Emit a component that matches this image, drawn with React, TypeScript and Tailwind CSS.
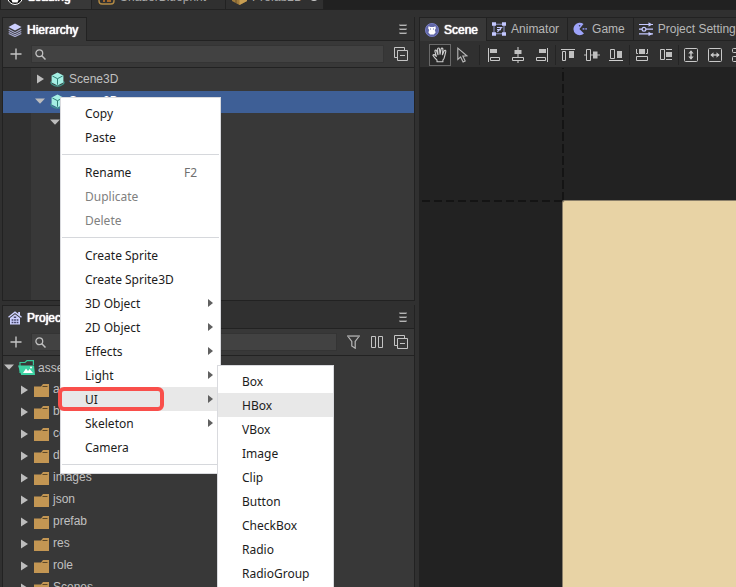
import React from "react";

function Svg({ w, h, className, children }: { w: number; h: number; className?: string; children: React.ReactNode }) {
  return (
    <svg
      width={w}
      height={h}
      viewBox={`0 0 ${w} ${h}`}
      fill="none"
      aria-hidden="true"
      className={`shrink-0 ${className ?? ""}`}
    >
      {children}
    </svg>
  );
}

const Layers = () => (
  <Svg w={14} h={14}>
    <path d="M7 0.5 13.5 4 7 7.5 0.5 4Z" fill="#cdd0ff" />
    <path d="M0.7 6.3 7 9.7l6.3-3.4M0.7 8.4 7 11.7l6.3-3.3M0.7 10.4 7 13.6l6.3-3.2" stroke="#a9abd2" strokeWidth="1.1" />
  </Svg>
);

const House = () => (
  <Svg w={14} h={14}>
    <path d="M0.5 6.2 7 1.2l6.5 5" stroke="#cdd0ff" strokeWidth="1.4" />
    <path d="M10.2 1h1.8v3h-1.8Z" fill="#cdd0ff" />
    <path d="M2 7 7 3.2 12 7v6.5H2Z" fill="#cdd0ff" />
    <path d="M5.8 5.5h2.4v1.6H5.8ZM3.6 8.3h1.8v1.5H3.6ZM6.1 8.3h1.8v1.5H6.1ZM8.6 8.3h1.8v1.5H8.6ZM3.6 10.8h1.8v1.5H3.6ZM6.1 10.8h1.8v1.5H6.1ZM8.6 10.8h1.8v1.5H8.6Z" fill="#45466a" />
  </Svg>
);

const Plus = () => (
  <Svg w={12} h={12}>
    <path d="M6 0.5v11M0.5 6h11" stroke="#c4c4c4" strokeWidth="1.4" />
  </Svg>
);

const Search = () => (
  <Svg w={11} h={11}>
    <circle cx="4.3" cy="4.3" r="3.4" stroke="#c0c0c0" strokeWidth="1.3" />
    <path d="m6.8 6.8 3.7 3.7" stroke="#c0c0c0" strokeWidth="1.5" />
  </Svg>
);

const Collapse = () => (
  <Svg w={14} h={14}>
    <path d="M3.5 10.5h-3v-10h10v3" stroke="#c4c4c4" />
    <path d="M3.5 3.5h10v10h-10ZM6 8.5h5" stroke="#c4c4c4" />
  </Svg>
);

const Filter = () => (
  <Svg w={13} h={14}>
    <path d="M0.7 1h11.6L8.2 6.4v6.8L4.8 11V6.4Z" stroke="#b8b8b8" strokeWidth="1.2" />
    <path d="M0.5 1.2h12" stroke="#8f8f8f" strokeWidth="1.4" />
  </Svg>
);

const Columns = () => (
  <Svg w={12} h={12}>
    <path d="M0.5 0.5h4v11h-4ZM7.5 0.5h4v11h-4Z" stroke="#c4c4c4" />
  </Svg>
);

const MenuLines = () => (
  <Svg w={8} h={11}>
    <path d="M0.5 1.5h7M0.5 5.5h7M0.5 9.5h7" stroke="#b4b4b4" />
    <path d="M0 0.5h8M0 4.5h8M0 8.5h8" stroke="#666" />
  </Svg>
);

const ArrowRight = () => (
  <Svg w={7} h={10}>
    <path d="M0 0.5 7 5 0 9.5Z" fill="#bdbdbd" />
  </Svg>
);

const ArrowDown = () => (
  <Svg w={10} h={6}>
    <path d="M0 0.5h10L5 5.7Z" fill="#bdbdbd" />
  </Svg>
);

const Cube = () => (
  <Svg w={15} h={15}>
    <path d="M1.5 9.5c-2 1.5 2 4.6 6 4.6s8-3.1 6-4.6" stroke="#3f9c90" strokeWidth="1.2" />
    <path d="M7.5 0.4 13.4 3.5v6.9l-5.9 3.1-5.9-3.1V3.5Z" fill="#a5f0e4" />
    <path d="m2.4 4 5.1 2.7L12.6 4M7.5 6.7v6" stroke="#2f7f75" />
  </Svg>
);

const Folder = () => (
  <Svg w={15} h={13}>
    <path d="M0 2.5h7l2-2.5h6v13H0Z" fill="#c39653" />
    <path d="M8.500 2.500h5" stroke="#5c4828" />
  </Svg>
);

const AssetsFolder = () => (
  <Svg w={17} h={15}>
    <path d="M2 13V2.5h5L9 0.6h6.4V5" stroke="#36c99b" strokeWidth="1.2" />
    <path d="M0 5.5h16L17 15H3.2Z" fill="#3ed3a4" />
    <path d="m5 13 3-4.5 2 2.6 1.7-2L15 13Z" fill="#fff" />
    <circle cx="13" cy="7.6" r="1" fill="#fff" />
  </Svg>
);

const SceneIcon = () => (
  <Svg w={14} h={14}>
    <circle cx="7" cy="7" r="6.6" fill="#6268a8" stroke="#7d84cf" strokeWidth="0.8" />
    <path d="M3.5 3.3 5.4 4h3.2l1.9-.7.3 2.2-1 1.5.8 2.6L8.8 11.4H5.2L3.4 9.6 4.2 7l-1-1.5Z" fill="#fff" />
    <path d="M5 6h1M8 6h1" stroke="#6268a8" />
  </Svg>
);

const AnimatorIcon = () => (
  <Svg w={14} h={14}>
    <path d="M2 2.2h10M2 11.8h10M2 2.2v9.6M12 2.2v9.6" stroke="#8a8fc0" strokeWidth="1.1" />
    <path d="M0 0.3h4v3.4H0ZM10 0.3h4v3.4h-4ZM0 10.3h4v3.4H0ZM10 10.3h4v3.4h-4Z" fill="#c4c8ff" />
    <path d="M5 5.5h4.6L5.4 9.8M5 7.6h4" stroke="#c4c8ff" strokeWidth="1.1" />
  </Svg>
);

const GameIcon = () => (
  <Svg w={14} h={14}>
    <path d="M10.5 1.9A6.3 6.3 0 1 0 11 11.6L6.4 7Z" fill="#9ea4fa" />
    <circle cx="6.6" cy="3.7" r="0.8" fill="#33344e" />
    <path d="M9.6 6h1.8v1.8H9.6ZM12.3 6h1.6v1.8h-1.6Z" fill="#8288d6" />
  </Svg>
);

const SettingsIcon = () => (
  <Svg w={14} h={14}>
    <path d="M0 2.5h14M0 7.2h14M0 11.9h14" stroke="#c4c8ff" strokeWidth="1.2" />
    <path d="M9.5 0.3v4.4L13.3 2.5ZM9.5 9.7v4.4l3.8-2.2Z" fill="#c4c8ff" />
    <circle cx="5" cy="7.2" r="1.9" fill="#303030" stroke="#c4c8ff" strokeWidth="1.2" />
  </Svg>
);

const Hand = () => (
  <Svg w={16} h={16}>
    <path
      d="M5 14.8v-1.6C3.4 11.6 1.6 9.8 0.9 8.3c.5-1 1.7-.8 2.4.1l1 1.1L2.9 4.2c-.1-1.2 1.3-1.5 1.7-.4L6 7.7 5.6 2c0-1.3 1.7-1.3 1.9 0L8 7.3 9.1 1.9c.3-1.2 1.9-1 1.8.3L10.4 7.7l1.8-3.9c.6-1 1.9-.4 1.6.7l-1.3 5.3c-.2 1.5-.7 2.4-1.6 3.4v1.6Z"
      stroke="#cfcfcf"
      strokeWidth="1.1"
      strokeLinejoin="round"
    />
  </Svg>
);

const Pointer = () => (
  <Svg w={11} h={16}>
    <path d="M0.8 1.2v11.3l2.8-2.6 2.5 5.2 2.1-1L5.8 9.1l4-.3Z" stroke="#b8b8b8" strokeWidth="1.1" />
  </Svg>
);

const AlignLeft = () => (
  <Svg w={12} h={14}>
    <path d="M0.5 0v14" stroke="#c8c8c8" />
    <path d="M2 1h7v4H2Z" fill="#c0c0c0" />
    <path d="M2.5 9.5h9v3h-9Z" stroke="#c8c8c8" />
  </Svg>
);
const AlignCenter = () => (
  <Svg w={12} h={16}>
    <path d="M6 0v10M6 14v2" stroke="#b8b8b8" strokeWidth="1.2" />
    <path d="M2.5 3h7v4h-7Z" fill="#c0c0c0" />
    <path d="M0.5 10.5h11v3h-11Z" stroke="#c8c8c8" />
  </Svg>
);
const AlignRight = () => (
  <Svg w={12} h={14}>
    <path d="M11.5 0v14" stroke="#c8c8c8" />
    <path d="M3 1h7v4H3Z" fill="#c0c0c0" />
    <path d="M0.5 9.5h9v3h-9Z" stroke="#c8c8c8" />
  </Svg>
);
const AlignTop = () => (
  <Svg w={14} h={12}>
    <path d="M0 0.5h14" stroke="#c8c8c8" />
    <path d="M1.5 2.5h3v9h-3Z" stroke="#c8c8c8" />
    <path d="M8 2h5v7H8Z" fill="#c0c0c0" />
  </Svg>
);
const AlignMiddle = () => (
  <Svg w={16} h={12}>
    <path d="M0 6h2M7 6h9" stroke="#b8b8b8" strokeWidth="1.2" />
    <path d="M2.5 0.5h4v11h-4Z" stroke="#c8c8c8" />
    <path d="M9 2.5h4.5v7H9Z" fill="#c0c0c0" />
  </Svg>
);
const AlignBottom = () => (
  <Svg w={14} h={12}>
    <path d="M0 11.5h14" stroke="#d0d0d0" />
    <path d="M1.5 0.5h4v9h-4Z" stroke="#c8c8c8" />
    <path d="M8 2h5v7H8Z" fill="#c0c0c0" />
  </Svg>
);
const DistributeV = () => (
  <Svg w={12} h={12}>
    <path d="M0.5 0v4.5H2M11.5 0v4.5H10" stroke="#c8c8c8" />
    <path d="M3 0h6v5H3Z" fill="#c0c0c0" />
    <path d="M0.5 7.5h11v4h-11Z" stroke="#c8c8c8" />
  </Svg>
);
const DistributeH = () => (
  <Svg w={12} h={12}>
    <path d="M0.5 0.5h4v10h-4ZM6 0.5h6M6 10.5h6" stroke="#c8c8c8" />
    <path d="M6 3h6v5H6Z" fill="#c0c0c0" />
  </Svg>
);
const StretchV = () => (
  <Svg w={14} h={14}>
    <rect x="0.5" y="0.5" width="13" height="13" rx="1" stroke="#c8c8c8" />
    <path d="M7 3v8" stroke="#c8c8c8" strokeWidth="1.4" />
    <path d="M4.3 5.5 7 2.3l2.7 3.2ZM4.3 8.5 7 11.7l2.7-3.2Z" fill="#c8c8c8" />
  </Svg>
);
const StretchH = () => (
  <Svg w={14} h={14}>
    <rect x="0.5" y="0.5" width="13" height="13" rx="1" stroke="#c8c8c8" />
    <path d="M3 7h8" stroke="#c8c8c8" strokeWidth="1.4" />
    <path d="M5.5 4.3 2.3 7l3.2 2.7ZM8.5 4.3 11.7 7 8.5 9.7Z" fill="#c8c8c8" />
  </Svg>
);
const GridIcon = () => (
  <Svg w={14} h={14}>
    <rect x="0.5" y="0.5" width="13" height="4" rx="1" stroke="#c8c8c8" />
    <rect x="0.5" y="8.5" width="13" height="5" rx="1" stroke="#c8c8c8" />
  </Svg>
);

const LogoIcon = () => (
  <Svg w={16} h={16}>
    <circle cx="8" cy="8" r="7.5" fill="#111" stroke="#fff" strokeWidth="1" />
    <path d="M4 5h8v5l-1.5 3.5h-5L4 10Z" fill="#fff" />
  </Svg>
);
const BlueprintIcon = () => (
  <Svg w={17} h={16}>
    <rect x="1" y="1" width="15" height="14" rx="3" stroke="#b28a45" strokeWidth="1.4" />
    <path d="M5 10h2v3H5ZM9 7h4v6H9Z" fill="#a5682c" />
  </Svg>
);
const PrefabIcon = () => (
  <Svg w={15} h={16}>
    <path d="M7.5 0 15 4v8l-7.5 4L0 12V4Z" fill="#a07b3c" />
    <path d="M7.5 8 15 4v8l-7.5 4Z" fill="#c79d52" />
    <path d="M4 6v8" stroke="#6d532a" />
  </Svg>
);

const activeTabText = "text-white [text-shadow:0_0_1px_#fff,0_0_1px_#fff]";

function DocumentTab({ icon, label, active, className }: { icon: React.ReactNode; label: React.ReactNode; active?: boolean; className: string }) {
  return (
    <button
      type="button"
      className={`flex h-6 shrink-0 items-center gap-[5px] border-r border-[#222222] pl-1.5 whitespace-nowrap ${
        active ? `bg-[#383838] ${activeTabText}` : "bg-[#303030] text-[#a8a8a8]"
      } ${className}`}
    >
      {icon}
      {label}
    </button>
  );
}

function PanelTab({ icon, label, active }: { icon: React.ReactNode; label: string; active?: boolean }) {
  return (
    <button
      type="button"
      role="tab"
      aria-selected={!!active}
      className={`flex shrink-0 items-center gap-[5px] border-t border-r border-[#222222] pr-2 pl-[5px] whitespace-nowrap ${
        active ? `h-6 bg-[#383838] ${activeTabText}` : "mb-px h-[23px] bg-[#303030] text-[#b8b8b8]"
      }`}
    >
      {icon}
      {label}
    </button>
  );
}

function IconButton({ label, children, className = "" }: { label: string; children: React.ReactNode; className?: string }) {
  return (
    <button type="button" aria-label={label} className={`flex h-6 shrink-0 items-center justify-center ${className}`}>
      {children}
    </button>
  );
}

function SidePanel({
  icon,
  title,
  actions,
  children,
  className,
}: {
  icon: React.ReactNode;
  title: string;
  actions: React.ReactNode;
  children: React.ReactNode;
  className: string;
}) {
  return (
    <section className={`flex flex-col overflow-hidden border-x border-[#222222] ${className}`}>
      <header className="flex shrink-0 items-center justify-between bg-[linear-gradient(#222222,#222222)] bg-[length:100%_1px] bg-bottom bg-no-repeat pr-[7px]">
        <PanelTab icon={icon} label={title} active />
        <IconButton label={`${title} menu`}>
          <MenuLines />
        </IconButton>
      </header>
      <div className="flex h-[27px] shrink-0 items-center border-b border-[#222222] bg-[#383838] pr-[6px] pl-[7px]">
        <IconButton label="Add">
          <Plus />
        </IconButton>
        <label className="ml-[9px] flex h-[18px] flex-1 items-center border border-[#343434] bg-[#424242] pl-[3px]">
          <Search />
          <input type="text" aria-label={`Search ${title}`} className="h-4 w-full min-w-0 bg-transparent px-1 outline-none" />
        </label>
        <div className="ml-1.5 flex items-center gap-[11px] pl-1">{actions}</div>
      </div>
      {children}
    </section>
  );
}

const folders = ["atlas", "bg", "config", "data", "images", "json", "prefab", "res", "role", "Scenes"];

type Item = { label: string; shortcut?: string; disabled?: boolean; sub?: boolean; active?: boolean };

const menuGroups: Item[][] = [
  [{ label: "Copy" }, { label: "Paste" }],
  [{ label: "Rename", shortcut: "F2" }, { label: "Duplicate", disabled: true }, { label: "Delete", disabled: true }],
  [
    { label: "Create Sprite" },
    { label: "Create Sprite3D" },
    { label: "3D Object", sub: true },
    { label: "2D Object", sub: true },
    { label: "Effects", sub: true },
    { label: "Light", sub: true },
    { label: "UI", sub: true, active: true },
    { label: "Skeleton", sub: true },
    { label: "Camera" },
  ],
];

const uiItems: Item[] = [
  { label: "Box" },
  { label: "HBox", active: true },
  { label: "VBox" },
  { label: "Image" },
  { label: "Clip" },
  { label: "Button" },
  { label: "CheckBox" },
  { label: "Radio" },
  { label: "RadioGroup" },
];

function MenuItem({ label, shortcut, disabled, sub, active }: Item) {
  return (
    <button
      type="button"
      role="menuitem"
      disabled={disabled}
      className={`flex h-6 w-full items-center justify-between pr-[7px] pl-6 ${active ? "bg-[#e8e8e8]" : ""} ${
        disabled ? "text-[#808080]" : "text-[#1c1c1c]"
      }`}
    >
      <span className="pt-0.5">{label}</span>
      {shortcut && <span className="mr-4 pt-0.5 text-[#707070]">{shortcut}</span>}
      {sub && (
        <Svg w={5} h={8}>
          <path d="M0 0 5 4 0 8Z" fill="#606060" />
        </Svg>
      )}
    </button>
  );
}

const ToolDivider = () => <span className="h-5 w-px shrink-0 bg-[#242424]" />;

export default function App() {
  return (
    <div className="relative flex h-screen flex-col overflow-hidden bg-[#303030] font-['Liberation_Sans',Arial,sans-serif] text-xs text-[#c0c0c0]">
      <nav className="flex h-[10px] shrink-0 items-end overflow-hidden border-b border-[#222222] bg-[#212121] pl-px">
        <DocumentTab icon={<LogoIcon />} label="Loading" active className="w-[91px]" />
        <DocumentTab icon={<BlueprintIcon />} label="ShaderBlueprint" className="w-[134px]" />
        <DocumentTab
          icon={<PrefabIcon />}
          label={
            <>
              Prefab2D
              <span className="ml-0.5 h-2 w-2 rounded-full bg-[#c8c8c8]" />
            </>
          }
          className="w-[98px]"
        />
      </nav>

      <div className="flex min-h-0 flex-1 pt-[7px]">
        <aside className="ml-[2px] flex w-[413px] shrink-0 flex-col">
          <SidePanel
            className="h-[284px] shrink-0 border-b"
            icon={<Layers />}
            title="Hierarchy"
            actions={
              <IconButton label="Collapse all">
                <Collapse />
              </IconButton>
            }
          >
            <ul className="flex-1 bg-[linear-gradient(90deg,#303030_28px,#383838_28px)] pt-px">
              <li className="flex h-[22px] items-center pb-0.5 pl-[34px]">
                <ArrowRight />
                <span className="ml-[6px] flex items-center gap-1">
                  <Cube />
                  Scene3D
                </span>
              </li>
              <li className="flex h-[22px] items-center bg-[#3e5f96] pb-0.5 pl-8 text-white">
                <ArrowDown />
                <span className="ml-[5px] flex items-center gap-1">
                  <Cube />
                  Scene2D
                </span>
              </li>
              <li className="flex h-[22px] items-center pb-1 pl-[47px]">
                <ArrowDown />
              </li>
            </ul>
          </SidePanel>

          <SidePanel
            className="mt-1 min-h-0 flex-1"
            icon={<House />}
            title="Project"
            actions={
              <>
                <IconButton label="Filter">
                  <Filter />
                </IconButton>
                <IconButton label="Columns">
                  <Columns />
                </IconButton>
                <IconButton label="Collapse all">
                  <Collapse />
                </IconButton>
              </>
            }
          >
            <ul className="flex-1 bg-[#383838]">
              <li className="flex h-[22px] items-center pl-px">
                <ArrowDown />
                <span className="ml-1 flex items-center gap-[3px] pt-px">
                  <AssetsFolder />
                  assets
                </span>
              </li>
              {folders.map((name) => (
                <li key={name} className="flex h-[22px] items-center pt-0.5 pl-[18px]">
                  <ArrowRight />
                  <span className="ml-[6px] flex items-center gap-1">
                    <Folder />
                    <span className="pb-0.5">{name}</span>
                  </span>
                </li>
              ))}
            </ul>
          </SidePanel>
        </aside>

        <main className="ml-1 flex min-w-0 flex-1 flex-col overflow-hidden border-l border-[#222222]">
          <div role="tablist" className="flex shrink-0 overflow-hidden bg-[linear-gradient(#222222,#222222)] bg-[length:100%_1px] bg-bottom bg-no-repeat">
            <PanelTab icon={<SceneIcon />} label="Scene" active />
            <PanelTab icon={<AnimatorIcon />} label="Animator" />
            <PanelTab icon={<GameIcon />} label="Game" />
            <PanelTab icon={<SettingsIcon />} label="Project Settings" />
          </div>
          <div role="toolbar" className="flex h-[27px] shrink-0 items-center overflow-hidden border-b border-[#222222] bg-[#303030] pt-0.5 pl-[9px]">
            <IconButton label="Pan" className="h-[22px] w-[22px] border border-[#6a6a6a] bg-[#292929]">
              <Hand />
            </IconButton>
            <IconButton label="Select" className="mr-[11px] ml-[6px]">
              <Pointer />
            </IconButton>
            <ToolDivider />
            <div className="flex items-center gap-3 pr-[7px] pl-2">
              <IconButton label="Align left"><AlignLeft /></IconButton>
              <IconButton label="Align center"><AlignCenter /></IconButton>
              <IconButton label="Align right"><AlignRight /></IconButton>
            </div>
            <ToolDivider />
            <div className="flex items-center gap-[9px] pr-[6px] pl-[5px]">
              <IconButton label="Align top"><AlignTop /></IconButton>
              <IconButton label="Align middle"><AlignMiddle /></IconButton>
              <IconButton label="Align bottom"><AlignBottom /></IconButton>
            </div>
            <ToolDivider />
            <div className="flex items-center gap-3 px-[6px]">
              <IconButton label="Distribute vertically"><DistributeV /></IconButton>
              <IconButton label="Distribute horizontally"><DistributeH /></IconButton>
            </div>
            <ToolDivider />
            <div className="flex items-center gap-[10px] pl-[5px]">
              <IconButton label="Stretch height"><StretchV /></IconButton>
              <IconButton label="Stretch width"><StretchH /></IconButton>
              <IconButton label="Grid"><GridIcon /></IconButton>
            </div>
          </div>
          <div className="grid flex-1 grid-cols-[142px_1fr] grid-rows-[132px_1fr] bg-[#222222]">
            <div />
            <div className="w-[2px] bg-[repeating-linear-gradient(#141414_0_1px,transparent_1px_4px,#141414_4px_12px)]" />
            <div className="pl-[2px]">
              <div className="h-[2px] bg-[repeating-linear-gradient(90deg,#141414_0_8px,transparent_8px_12px)]" />
            </div>
            <div className="rounded-tl-[3px] border-t border-l border-[#8a7f6a] bg-[#e8d3a5]" />
          </div>
        </main>
      </div>

      <div
        role="menu"
        aria-label="Node menu"
        className="absolute top-[97px] left-[60px] w-[161px] border border-[#d9dade] bg-white py-[3px] font-['Noto_Sans','Open_Sans',sans-serif] text-xs"
      >
        {menuGroups.map((group) => (
          <div key={group[0].label} role="group">
            {group.map((item) => (
              <MenuItem key={item.label} {...item} />
            ))}
            <div role="separator" className="mx-px my-[5px] h-px bg-[#d6d8dc]" />
          </div>
        ))}
      </div>

      <div
        role="menu"
        aria-label="UI"
        className="absolute top-[365px] left-[217px] w-[117px] border border-[#d9dade] bg-white py-[3px] font-['Noto_Sans','Open_Sans',sans-serif] text-xs"
      >
        {uiItems.map((item) => (
          <MenuItem key={item.label} {...item} />
        ))}
      </div>

      <div className="pointer-events-none absolute top-[387px] left-[58px] h-6 w-[106px] rounded-[6px] border-4 border-[#f94f4b]" />
    </div>
  );
}
